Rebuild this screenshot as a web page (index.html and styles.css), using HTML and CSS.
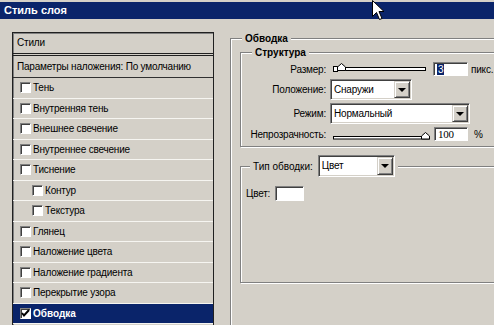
FILE: index.html
```html
<!DOCTYPE html>
<html lang="ru">
<head>
    <meta charset="UTF-8">
    <title>Стиль слоя</title>
    <link rel="stylesheet" href="styles.css">
</head>
<body>
    <div class="titlebar">Стиль слоя</div>
    <svg class="cursor" width="13" height="21" viewBox="0 0 13 21">
        <polygon points="0.5,0.5 0.5,16.5 4.5,12.5 7.5,19.5 10,18.5 7,11.5 12,11.5" fill="#fff" stroke="#000" stroke-width="1"/>
    </svg>

    <div class="dialog">
        <div class="styles-list">
            <div class="list-head">Стили</div>
            <div class="list-blend">Параметры наложения: По умолчанию</div>
            <div class="list-item"><span class="check"></span>Тень</div>
            <div class="list-item"><span class="check"></span>Внутренняя тень</div>
            <div class="list-item"><span class="check"></span>Внешнее свечение</div>
            <div class="list-item"><span class="check"></span>Внутреннее свечение</div>
            <div class="list-item"><span class="check"></span>Тиснение</div>
            <div class="list-item sub"><span class="check"></span>Контур</div>
            <div class="list-item sub"><span class="check"></span>Текстура</div>
            <div class="list-item"><span class="check"></span>Глянец</div>
            <div class="list-item"><span class="check"></span>Наложение цвета</div>
            <div class="list-item"><span class="check"></span>Наложение градиента</div>
            <div class="list-item"><span class="check"></span>Перекрытие узора</div>
            <div class="list-item selected">
                <span class="check">
                    <svg width="9" height="9" viewBox="0 0 9 9"><polyline points="1,4 3,6.5 8,1" fill="none" stroke="#000" stroke-width="2"/></svg>
                </span>Обводка
            </div>
            <div class="list-item"></div>
        </div>

        <div class="panel">
            <fieldset class="group group-main">
                <legend>Обводка</legend>

                <fieldset class="group group-structure">
                    <legend>Структура</legend>
                    <div class="form-grid">
                        <label>Размер:</label>
                        <div class="control">
                            <svg class="slider" width="94" height="14" viewBox="0 0 94 14">
                                <rect x="0.5" y="5.5" width="92" height="3" fill="#fff" stroke="#000"/>
                                <rect x="0.5" y="4.5" width="4" height="5" fill="#fff" stroke="#000"/>
                                <polygon points="8.5,1.5 12.5,5 12.5,8.5 4.5,8.5 4.5,5" fill="#fff" stroke="#000"/>
                            </svg>
                            <span class="field field-size"><span class="selection">3</span></span>
                            <span class="unit">пикс.</span>
                        </div>

                        <label>Положение:</label>
                        <div class="control">
                            <div class="combo combo-position">
                                <span class="combo-value">Снаружи</span>
                                <span class="combo-btn"></span>
                            </div>
                        </div>

                        <label>Режим:</label>
                        <div class="control">
                            <div class="combo combo-mode">
                                <span class="combo-value">Нормальный</span>
                                <span class="combo-btn"></span>
                            </div>
                        </div>

                        <label>Непрозрачность:</label>
                        <div class="control">
                            <svg class="slider" width="98" height="14" viewBox="0 0 98 14">
                                <rect x="0.5" y="9.5" width="96" height="2.5" fill="#fff" stroke="#000"/>
                                <polygon points="92.5,5.5 96.5,9 96.5,12 88.5,12 88.5,9" fill="#fff" stroke="#000"/>
                            </svg>
                            <span class="field field-opacity">100</span>
                            <span class="unit unit-pct">%</span>
                        </div>
                    </div>
                </fieldset>

                <fieldset class="group group-type">
                    <legend>
                        <span class="legend-row">
                            <span>Тип обводки:</span>
                            <span class="combo combo-type">
                                <span class="combo-value">Цвет</span>
                                <span class="combo-btn"></span>
                            </span>
                        </span>
                    </legend>
                    <div class="color-row">
                        <span>Цвет:</span>
                        <span class="swatch"></span>
                    </div>
                </fieldset>
            </fieldset>
        </div>
    </div>
</body>
</html>
```

FILE: styles.css
```css
body {
    margin: 0;
    height: 325px;
    overflow: hidden;
    position: relative;
    background-color: #d4d0c8;
    font-family: "Liberation Sans", Arial, sans-serif;
    font-size: 10px;
    letter-spacing: -0.2px;
    color: #000;
}
.titlebar {
    margin-top: 2px;
    height: 17px;
    line-height: 17px;
    padding-left: 4px;
    background-color: #0a246a;
    color: #fff;
    font-size: 11px;
    font-weight: bold;
    letter-spacing: 0;
}
.cursor {
    position: absolute;
    left: 372px;
    top: 0;
}
.dialog {
    display: flex;
    padding: 13px 0 0 12px;
}

/* left list of styles */
.styles-list {
    width: 202px;
    height: 320px;
    flex-shrink: 0;
    box-sizing: border-box;
    border: 1px solid #202020;
    box-shadow: inset 1px 1px 0 #808080;
    overflow: hidden;
}
.list-head {
    height: 20px;
    line-height: 20px;
    padding-left: 4px;
    border-bottom: 3px double #202020;
}
.list-blend {
    height: 21px;
    line-height: 21px;
    padding-left: 4px;
    white-space: nowrap;
    border-bottom: 1px solid #303030;
}
.list-item {
    display: flex;
    align-items: center;
    box-sizing: border-box;
    height: 20.5px;
    padding-left: 7px;
    border-bottom: 1px solid #f6f5f1;
}
.list-item.sub {
    padding-left: 19px;
}
.list-item.selected {
    background-color: #0a246a;
    color: #fff;
    font-weight: bold;
    letter-spacing: 0;
}
.check {
    display: flex;
    align-items: center;
    justify-content: center;
    width: 11px;
    height: 11px;
    margin-right: 2px;
    box-sizing: border-box;
    background-color: #fff;
    border: 1px solid;
    border-color: #808080 #fff #fff #808080;
    box-shadow: inset 1px 1px 0 #404040;
}

/* right side */
.panel {
    flex: 1;
    overflow: hidden;
    padding-left: 16px;
}
.group {
    margin: 0;
    padding: 0;
    min-width: 0;
    border: 1px solid #808080;
    box-shadow: inset 1px 1px 0 #fff, 1px 1px 0 #fff;
}
.group legend {
    padding: 0 3px;
    line-height: 13px;
    background-color: #d4d0c8;
    font-weight: bold;
    letter-spacing: 0;
}
.group-main {
    width: 320px;
    height: 330px;
    padding: 1px 0 0 9px;
}
.group-main > legend {
    margin-left: 2px;
}
.group-structure {
    width: 300px;
    padding: 3px 0 5px 4px;
}
.group-structure > legend {
    margin-left: 7px;
}
.form-grid {
    display: grid;
    grid-template-columns: 81px 1fr;
    grid-template-rows: 14px 21px 21px 14px;
    column-gap: 4px;
    row-gap: 3px;
}
.form-grid label {
    display: flex;
    align-items: center;
    justify-content: flex-end;
    white-space: nowrap;
}
.control {
    display: flex;
    align-items: center;
}
.slider {
    margin-left: 3px;
    flex-shrink: 0;
}
.field {
    box-sizing: border-box;
    height: 14px;
    padding-left: 3px;
    background-color: #fff;
    border: 1px solid;
    border-color: #808080 #fff #fff #808080;
    box-shadow: inset 1px 1px 0 #404040;
    display: flex;
    align-items: center;
}
.field-size {
    width: 35px;
    margin-left: 6px;
}
.selection {
    background-color: #0a246a;
    color: #fff;
    padding: 0 1px;
    line-height: 11px;
}
.field-opacity {
    width: 34px;
    margin-left: 3px;
    font-family: "Liberation Serif", "Times New Roman", serif;
    font-size: 11px;
}
.unit {
    margin-left: 3px;
}
.unit-pct {
    margin-left: 6px;
}
.combo {
    display: flex;
    box-sizing: border-box;
    height: 21px;
    background-color: #fff;
    border: 1px solid;
    border-color: #808080 #fff #fff #808080;
    box-shadow: inset 1px 1px 0 #404040, inset -1px -1px 0 #d4d0c8;
    font-weight: normal;
    letter-spacing: -0.2px;
}
.combo-value {
    flex: 1;
    padding-left: 3px;
    line-height: 19px;
}
.combo-btn {
    width: 16px;
    margin: 1px 1px 1px 0;
    box-sizing: border-box;
    background-color: #d4d0c8;
    border: 1px solid;
    border-color: #d4d0c8 #404040 #404040 #d4d0c8;
    box-shadow: inset 1px 1px 0 #fff, inset -1px -1px 0 #808080;
    display: flex;
    align-items: center;
    justify-content: center;
}
.combo-btn::after {
    content: "";
    border-left: 4px solid transparent;
    border-right: 4px solid transparent;
    border-top: 4px solid #000;
}
.combo-position {
    width: 82px;
}
.combo-mode {
    width: 140px;
}
.group-type {
    width: 300px;
    margin-top: 8px;
    padding: 9px 0 81px 5px;
}
.group-type > legend {
    margin-left: 4px;
    font-weight: normal;
    letter-spacing: 0;
}
.legend-row {
    display: flex;
    align-items: center;
    gap: 5px;
}
.combo-type {
    width: 77px;
    height: 22px;
}
.color-row {
    display: flex;
    align-items: center;
    gap: 5px;
}
.swatch {
    width: 29px;
    height: 15px;
    box-sizing: border-box;
    background-color: #fff;
    border: 1px solid;
    border-color: #808080 #fff #fff #808080;
    box-shadow: inset 1px 1px 0 #404040;
}
```
